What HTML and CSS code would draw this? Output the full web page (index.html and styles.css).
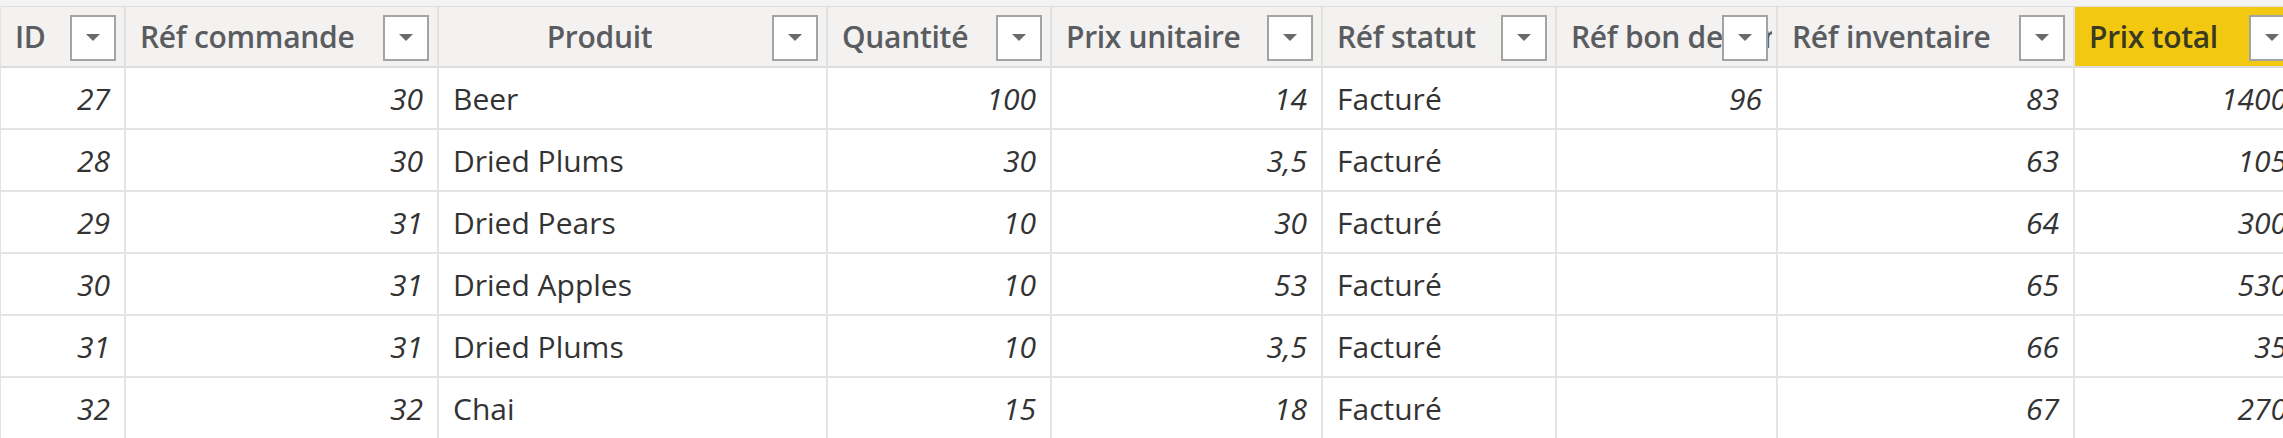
FILE: index.html
```html
<!DOCTYPE html>
<html lang="fr">
<head>
<meta charset="utf-8">
<title>Détails commande</title>
<link rel="stylesheet" href="styles.css">
</head>
<body>
<div class="view">
  <div class="grid">
    <div class="hcell"><span class="htext">ID</span><span class="filter"></span></div>
    <div class="hcell"><span class="htext">Réf commande</span><span class="filter"></span></div>
    <div class="hcell center"><span class="htext">Produit</span><span class="filter"></span></div>
    <div class="hcell"><span class="htext">Quantité</span><span class="filter"></span></div>
    <div class="hcell"><span class="htext">Prix unitaire</span><span class="filter"></span></div>
    <div class="hcell"><span class="htext">Réf statut</span><span class="filter"></span></div>
    <div class="hcell clip"><span class="htext">Réf bon de commande</span><span class="filter"></span></div>
    <div class="hcell"><span class="htext">Réf inventaire</span><span class="filter"></span></div>
    <div class="hcell selected"><span class="htext">Prix total</span><span class="filter"></span></div>

    <div class="cell num">27</div><div class="cell num">30</div><div class="cell">Beer</div><div class="cell num">100</div><div class="cell num">14</div><div class="cell">Facturé</div><div class="cell num">96</div><div class="cell num">83</div><div class="cell num">1400</div>
    <div class="cell num">28</div><div class="cell num">30</div><div class="cell">Dried Plums</div><div class="cell num">30</div><div class="cell num">3,5</div><div class="cell">Facturé</div><div class="cell num"></div><div class="cell num">63</div><div class="cell num">105</div>
    <div class="cell num">29</div><div class="cell num">31</div><div class="cell">Dried Pears</div><div class="cell num">10</div><div class="cell num">30</div><div class="cell">Facturé</div><div class="cell num"></div><div class="cell num">64</div><div class="cell num">300</div>
    <div class="cell num">30</div><div class="cell num">31</div><div class="cell">Dried Apples</div><div class="cell num">10</div><div class="cell num">53</div><div class="cell">Facturé</div><div class="cell num"></div><div class="cell num">65</div><div class="cell num">530</div>
    <div class="cell num">31</div><div class="cell num">31</div><div class="cell">Dried Plums</div><div class="cell num">10</div><div class="cell num">3,5</div><div class="cell">Facturé</div><div class="cell num"></div><div class="cell num">66</div><div class="cell num">35</div>
    <div class="cell num">32</div><div class="cell num">32</div><div class="cell">Chai</div><div class="cell num">15</div><div class="cell num">18</div><div class="cell">Facturé</div><div class="cell num"></div><div class="cell num">67</div><div class="cell num">270</div>
  </div>
</div>
</body>
</html>
```

FILE: styles.css
```css
html, body {
  margin: 0;
  padding: 0;
  background: #ffffff;
  overflow: hidden;
}

.view {
  width: 2283px;
  height: 438px;
  overflow: hidden;
  background: #f3f3f3;
  padding-top: 6px;
  box-sizing: border-box;
  font-family: "Open Sans", "Noto Sans", sans-serif;
}

.grid {
  display: grid;
  grid-template-columns: 125px 313px 389px 224px 271px 234px 221px 297px 228px;
  grid-template-rows: 61px;
  grid-auto-rows: 62px;
  width: max-content;
  border-top: 1px solid #dedede;
  border-left: 1px solid #e3e3e3;
  background: #ffffff;
}

.hcell {
  position: relative;
  display: flex;
  align-items: center;
  box-sizing: border-box;
  padding: 0 62px 0 14px;
  background: #f3f2f1;
  border-right: 2px solid #e1e1e1;
  border-bottom: 2px solid #dcdcdc;
  color: #5a5c60;
  font-size: 30px;
  font-weight: 600;
  white-space: nowrap;
  overflow: hidden;
}

.hcell.center {
  justify-content: center;
  padding-right: 80px;
}

.hcell.clip {
  padding-right: 4px;
}

.htext {
  overflow: hidden;
  letter-spacing: -0.3px;
}

.hcell.selected {
  background: #f2c811;
  color: #3a3a22;
  border-right: none;
}

.filter {
  position: absolute;
  right: 8px;
  top: 8px;
  width: 46px;
  height: 46px;
  box-sizing: border-box;
  background: #ffffff;
  border: 2px solid #a3a3a3;
}

.filter::after {
  content: "";
  position: absolute;
  left: 50%;
  top: 50%;
  margin-left: -7px;
  margin-top: -4px;
  border-left: 7px solid transparent;
  border-right: 7px solid transparent;
  border-top: 7px solid #6a6a6a;
}

.cell {
  display: flex;
  align-items: center;
  box-sizing: border-box;
  padding: 1px 13px 0 14px;
  border-right: 2px solid #e4e4e4;
  border-bottom: 2px solid #e4e4e4;
  color: #333333;
  font-size: 30px;
  white-space: nowrap;
  overflow: hidden;
}

.cell.num {
  justify-content: flex-end;
  font-style: italic;
  padding-right: 14px;
}
```
